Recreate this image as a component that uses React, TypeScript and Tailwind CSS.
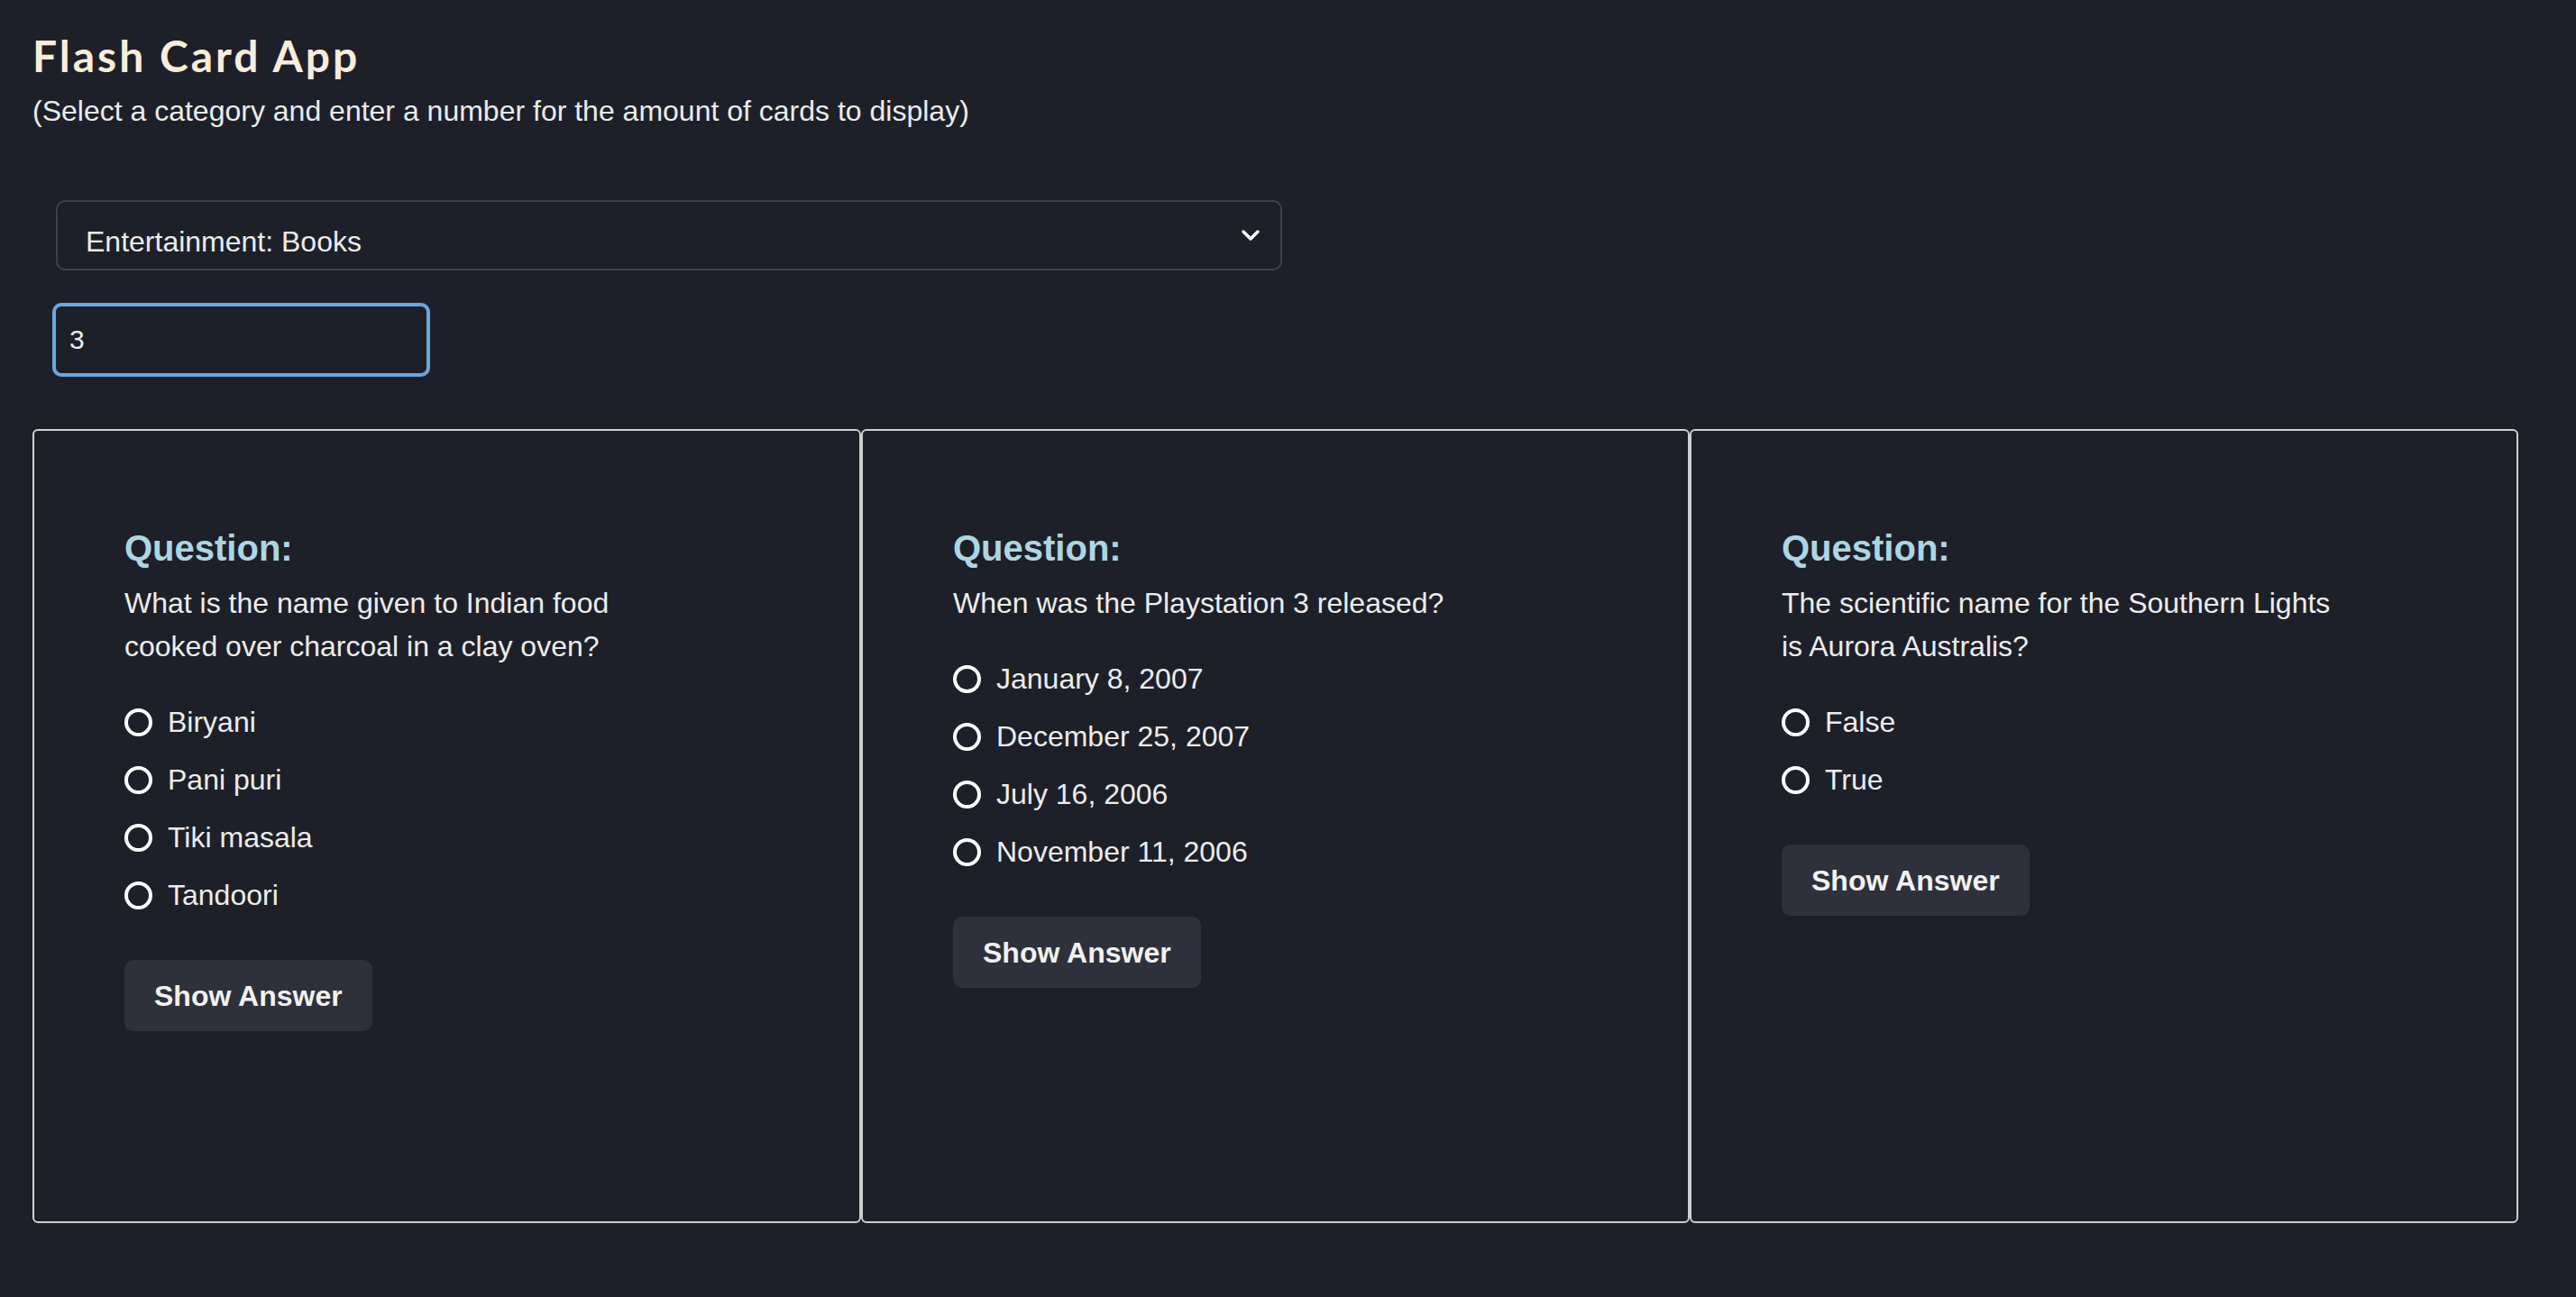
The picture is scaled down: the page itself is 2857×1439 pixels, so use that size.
import { useState } from "react"

type Card = {
  question: string
  options: string[]
}

const CARDS: Card[] = [
  {
    question: "What is the name given to Indian food cooked over charcoal in a clay oven?",
    options: ["Biryani", "Pani puri", "Tiki masala", "Tandoori"],
  },
  {
    question: "When was the Playstation 3 released?",
    options: ["January 8, 2007", "December 25, 2007", "July 16, 2006", "November 11, 2006"],
  },
  {
    question: "The scientific name for the Southern Lights is Aurora Australis?",
    options: ["False", "True"],
  },
]

function FlashCard({ card }: { card: Card }) {
  const [picked, setPicked] = useState<number | null>(null)

  return (
    <div className="min-h-[881px] rounded-[6px] border-2 border-[#cfcfd1] pl-[100px] pr-[40px] pt-[107px] pb-[100px]">
      <h3 className="text-[40px] font-bold leading-[46px] text-[#add5e2]">Question:</h3>
      <p className="mt-[14px] max-w-[622px] text-[32px] leading-[48px] text-[#ececec]">
        {card.question}
      </p>
      <div className="mt-[36px] flex flex-col gap-[16px]">
        {card.options.map((opt, i) => (
          <label
            key={opt}
            className="flex h-[48px] cursor-pointer items-center"
            onClick={() => setPicked(i)}
          >
            {/* native radios render too small at this scale, so draw the ring */}
            <span className="flex h-[31px] w-[31px] shrink-0 items-center justify-center rounded-full border-[4px] border-white">
              {picked === i ? <span className="h-[12px] w-[12px] rounded-full bg-white" /> : null}
            </span>
            <span className="ml-[17px] text-[32px] leading-[48px] text-[#ececec]">{opt}</span>
          </label>
        ))}
      </div>
      <button
        type="button"
        className="mt-[48px] h-[79px] rounded-[10px] bg-[#2e313b] px-[33px] text-[32px] font-bold text-[#f1f1f1]"
      >
        Show Answer
      </button>
    </div>
  )
}

export default function App() {
  const [amount, setAmount] = useState("3")

  return (
    <div
      className="min-h-screen bg-[#1e2029] px-[36px] pt-[34px] pb-[60px]"
      style={{ fontFamily: '"Liberation Sans", Arial, sans-serif' }}
    >
      <h1
        className="text-[48px] font-bold leading-[56px] tracking-[3px] text-[#f8ecdb]"
        style={{ fontFamily: 'Lato, "Liberation Sans", sans-serif' }}
      >
        Flash Card App
      </h1>
      <p className="mt-[15px] text-[32px] leading-[37px] text-[#ebebeb]">
        (Select a category and enter a number for the amount of cards to display)
      </p>

      <div className="ml-[26px] mt-[80px] flex h-[78px] w-[1360px] items-start justify-between rounded-[10px] border-2 border-[#3d414b] pl-[31px] pr-[22px] pt-[26px]">
        <span className="text-[32px] leading-[37px] text-[#ececec]">Entertainment: Books</span>
        <svg width="22" height="14" viewBox="0 0 22 14" className="mt-[4px]">
          <polyline
            points="3,3 11,11 19,3"
            fill="none"
            stroke="#ffffff"
            strokeWidth="3.5"
            strokeLinecap="round"
            strokeLinejoin="round"
          />
        </svg>
      </div>

      <input
        value={amount}
        onChange={(e) => setAmount(e.target.value)}
        className="ml-[22px] mt-[36px] block h-[82px] w-[419px] rounded-[10px] border-[4px] border-[#6aa6de] bg-transparent pl-[15px] text-[30px] text-[#ececec] outline-none"
      />

      <div className="mt-[58px] grid w-[2757px] grid-cols-3">
        {CARDS.map((c) => (
          <FlashCard key={c.question} card={c} />
        ))}
      </div>
    </div>
  )
}
